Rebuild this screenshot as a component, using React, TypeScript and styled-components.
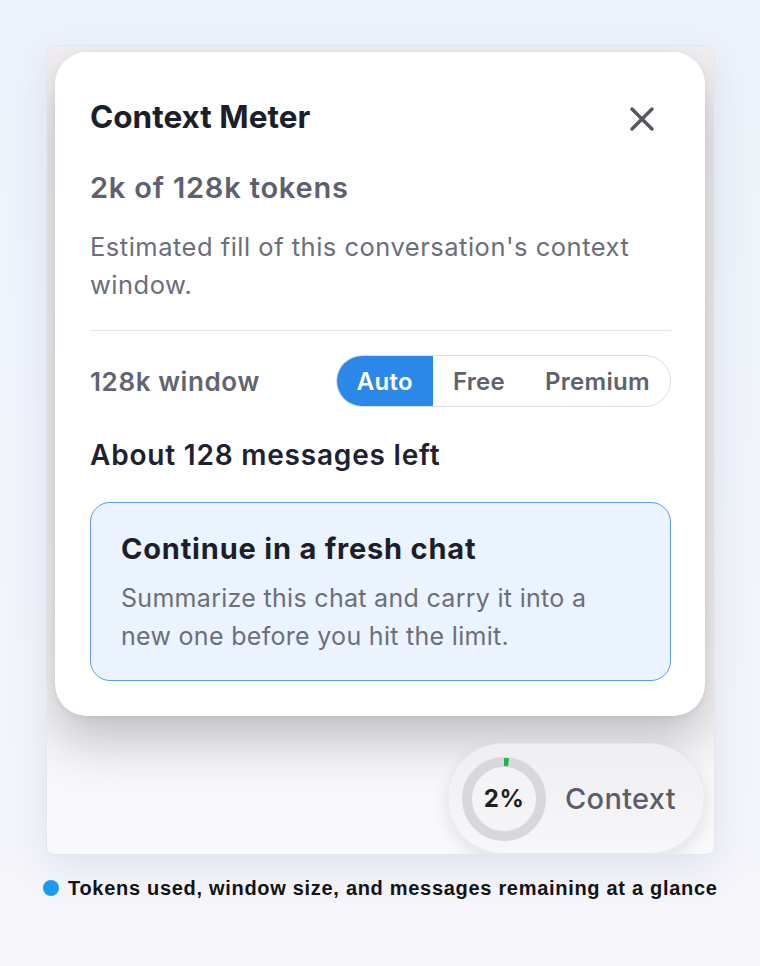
import React, { FC } from "react";
import styled, { createGlobalStyle } from "styled-components";
import { X } from "lucide-react";

const GlobalStyle = createGlobalStyle`
  html, body {
    margin: 0;
    padding: 0;
  }
  body {
    min-height: 966px;
    background: linear-gradient(180deg, #edf3fb 0%, #f1f4fa 55%, #f6f6fb 100%);
    font-family: "Inter", "Noto Sans", sans-serif;
    -webkit-font-smoothing: antialiased;
  }
`;

const plans = ["Auto", "Free", "Premium"];

const Ring: FC<{ percent: number }> = ({ percent }) => {
  const r = 37;
  const circ = 2 * Math.PI * r;
  const filled = Math.max((circ * percent) / 100, 0);
  return (
    <RingBox>
      <svg width="84" height="84" viewBox="0 0 84 84">
        <circle cx="42" cy="42" r={r} fill="#f4f4f6" stroke="#d8d8db" strokeWidth="10" />
        <circle
          cx="42"
          cy="42"
          r={r}
          fill="none"
          stroke="#22b14c"
          strokeWidth="8"
          strokeDasharray={`${filled} ${circ}`}
          transform="rotate(-90 42 42)"
        />
      </svg>
      <RingLabel>{percent}%</RingLabel>
    </RingBox>
  );
};

const App: FC = () => {
  const active = "Auto";

  return (
    <>
      <GlobalStyle />
      <Stage>
        <Frame>
          <Popover>
            <Header>
              <Title>Context Meter</Title>
              <CloseButton aria-label="Close">
                <X size={40} strokeWidth={2} />
              </CloseButton>
            </Header>
            <Usage>2k of 128k tokens</Usage>
            <Description>
              Estimated fill of this conversation's context window.
            </Description>
            <Divider />
            <WindowRow>
              <WindowLabel>128k window</WindowLabel>
              <Segmented>
                {plans.map(p => (
                  <Segment key={p} $active={p === active}>
                    {p}
                  </Segment>
                ))}
              </Segmented>
            </WindowRow>
            <Remaining>About 128 messages left</Remaining>
            <FreshCard>
              <FreshTitle>Continue in a fresh chat</FreshTitle>
              <FreshText>
                Summarize this chat and carry it into a new one before you hit
                the limit.
              </FreshText>
            </FreshCard>
          </Popover>
          <Pill>
            <Ring percent={2} />
            <PillText>Context</PillText>
          </Pill>
        </Frame>
        <Caption>
          <Dot />
          Tokens used, window size, and messages remaining at a glance
        </Caption>
      </Stage>
    </>
  );
};

const Stage = styled.div`
  padding: 45px 0 0 46px;
  display: flex;
  flex-direction: column;
`;

const Frame = styled.div`
  width: 669px;
  height: 810px;
  box-sizing: border-box;
  border: 1px solid #e4e6ee;
  border-radius: 8px;
  background: linear-gradient(180deg, #f1eff2 0%, #f3f2f4 60%, #f9f8fa 100%);
  box-shadow: 0 12px 40px rgba(70, 90, 130, 0.12);
  padding: 6px 9px 0 8px;
  display: flex;
  flex-direction: column;
  align-items: flex-end;
  overflow: hidden;
`;

const Popover = styled.div`
  width: 650px;
  box-sizing: border-box;
  align-self: flex-start;
  background: #ffffff;
  border-radius: 32px;
  padding: 45px 34px 35px 35px;
  box-shadow: 0 24px 50px rgba(40, 35, 50, 0.26), 0 2px 6px rgba(40, 35, 50, 0.06);
  display: flex;
  flex-direction: column;
`;

const Header = styled.div`
  display: flex;
  align-items: center;
  justify-content: space-between;
  height: 40px;
`;

const Title = styled.h1`
  margin: 0;
  font-size: 31.5px;
  line-height: 38px;
  font-weight: 700;
  color: #1c1f2a;
`;

const CloseButton = styled.button`
  border: 0;
  background: none;
  padding: 0;
  margin-right: 9px;
  margin-top: 4px;
  width: 40px;
  height: 40px;
  color: #55575f;
  display: flex;
  align-items: center;
  justify-content: center;
`;

const Usage = styled.div`
  margin-top: 34px;
  font-size: 29px;
  line-height: 34px;
  font-weight: 600;
  letter-spacing: 0.8px;
  color: #5d606e;
`;

const Description = styled.p`
  margin: 23px 0 0;
  font-size: 25.5px;
  line-height: 38px;
  letter-spacing: 0.5px;
  color: #6b6e7b;
`;

const Divider = styled.div`
  height: 1px;
  background: #e3e3e8;
  margin-top: 26px;
`;

const WindowRow = styled.div`
  margin-top: 24px;
  display: flex;
  align-items: center;
  justify-content: space-between;
`;

const WindowLabel = styled.span`
  font-size: 26px;
  font-weight: 600;
  letter-spacing: 0.6px;
  color: #62646f;
`;

const Segmented = styled.div`
  display: flex;
  height: 52px;
  box-sizing: border-box;
  border: 1px solid #dcdde3;
  border-radius: 26px;
  overflow: hidden;
  background: #ffffff;
`;

const Segment = styled.div<{ $active?: boolean }>`
  display: flex;
  align-items: center;
  padding: 0 20px;
  font-size: 24px;
  font-weight: 600;
  letter-spacing: 0.3px;
  color: ${p => (p.$active ? "#ffffff" : "#5f616c")};
  background: ${p => (p.$active ? "#2b88e8" : "transparent")};
`;

const Remaining = styled.div`
  margin-top: 31px;
  font-size: 28px;
  line-height: 34px;
  font-weight: 600;
  letter-spacing: 0.8px;
  color: #1d2130;
`;

const FreshCard = styled.div`
  margin-top: 30px;
  border: 1.5px solid #5b9ce8;
  border-radius: 20px;
  background: #ebf3fe;
  padding: 27.5px 30px 25.5px;
`;

const FreshTitle = styled.div`
  font-size: 29px;
  line-height: 36px;
  font-weight: 700;
  letter-spacing: 0.8px;
  color: #1c1f2a;
`;

const FreshText = styled.p`
  margin: 12px 0 0;
  font-size: 25px;
  line-height: 38px;
  letter-spacing: 0.3px;
  color: #6b6e7b;
`;

const Pill = styled.div`
  margin-top: 27px;
  height: 111px;
  width: 258px;
  flex-shrink: 0;
  box-sizing: border-box;
  border-radius: 56px;
  border: 1px solid #e7e6ea;
  background: linear-gradient(180deg, #efeef1 0%, #f7f7f9 100%);
  box-shadow: 0 6px 16px rgba(30, 30, 40, 0.1);
  display: flex;
  align-items: center;
  gap: 19px;
  padding-left: 14px;
`;

const RingBox = styled.div`
  display: grid;
  place-items: center;
  width: 84px;
  height: 84px;
  & > * {
    grid-area: 1 / 1;
  }
`;

const RingLabel = styled.span`
  font-size: 24px;
  font-weight: 700;
  letter-spacing: 0.4px;
  color: #1f2024;
`;

const PillText = styled.span`
  font-size: 29px;
  font-weight: 500;
  letter-spacing: 0.3px;
  color: #5c5d66;
`;

const Caption = styled.div`
  margin: 22px 0 0 -3px;
  display: flex;
  align-items: center;
  gap: 9px;
  font-family: "Liberation Sans", Arial, sans-serif;
  font-size: 20px;
  line-height: 22px;
  font-weight: 700;
  letter-spacing: 0.7px;
  color: #121317;
`;

const Dot = styled.span`
  width: 16px;
  height: 16px;
  border-radius: 50%;
  background: #1b9bf0;
  flex-shrink: 0;
`;

export default App;
